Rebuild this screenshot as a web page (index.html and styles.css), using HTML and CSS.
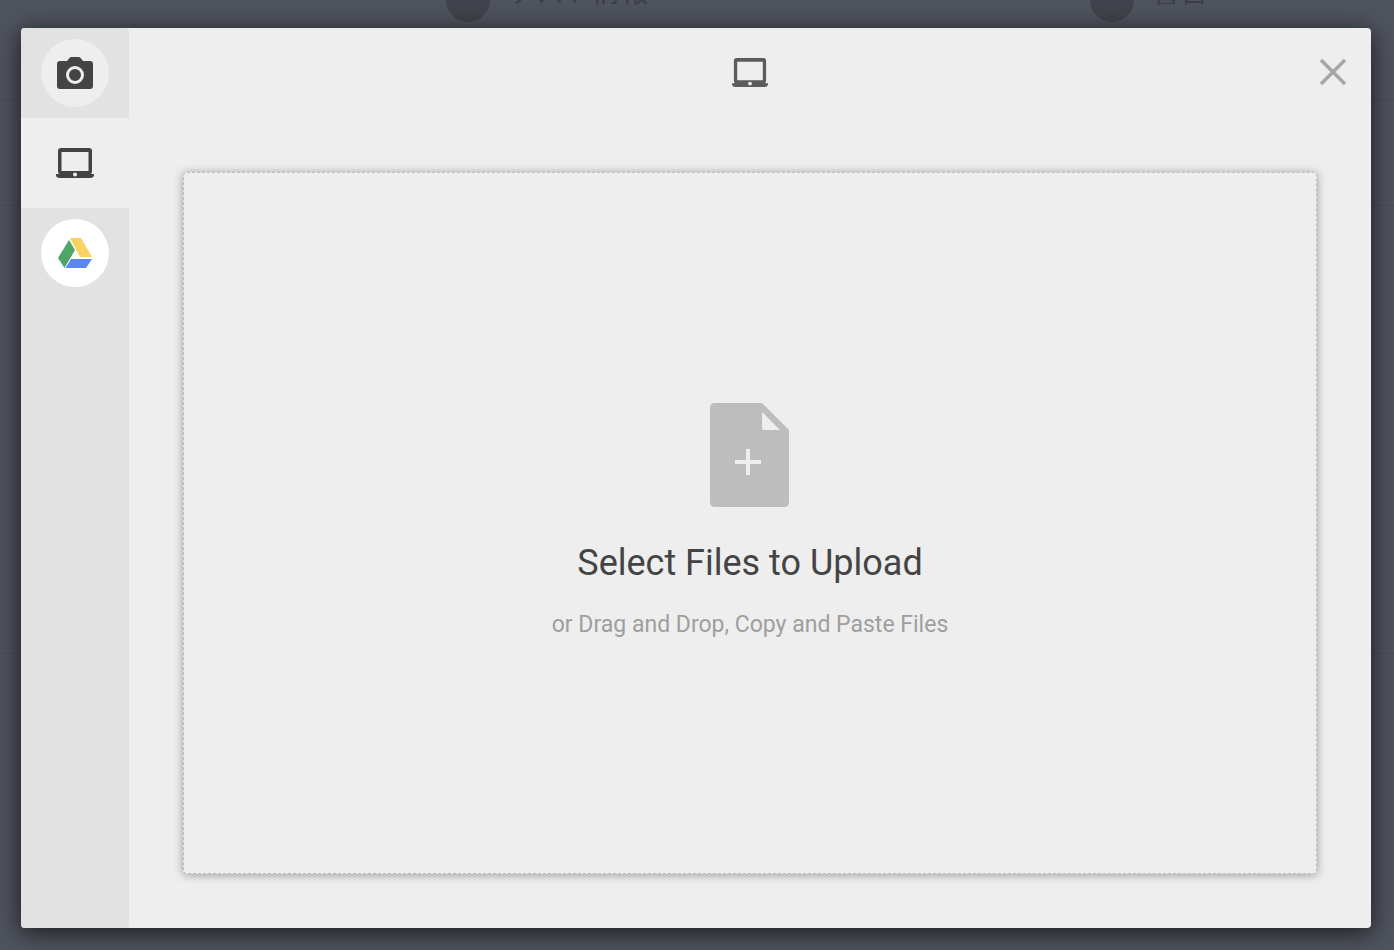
FILE: index.html
```html
<!DOCTYPE html>
<html lang="ja">
<head>
<meta charset="utf-8">
<title>Select Files to Upload</title>
<link rel="stylesheet" href="styles.css">
</head>

<body>
<div id="page">
	<div class="bar">
		<div class="step"><i class="dot"></i><span>ゲスト情報</span></div>
		<div class="step"><i class="dot"></i><span>警告</span></div>
	</div>
	<div class="row"></div>
	<div class="row rowBig"></div>
</div>

<div id="overlay">
	<div id="picker" role="dialog" aria-label="Select Files to Upload">
		<div id="sidebar">
			<button type="button" class="source" aria-label="Camera">
				<span class="circle">
					<svg width="36" height="32" viewBox="0 0 36 32">
						<path fill="#444" d="M3 4h7l2-2.500Q13 0 14 0h8q1 0 2 1.500L26 4h7q3 0 3 3v22q0 3-3 3H3q-3 0-3-3V7q0-3 3-3z"/>
						<circle cx="18" cy="18" r="7.500" fill="none" stroke="#eee" stroke-width="3"/>
					</svg>
				</span>
			</button>
			<button type="button" class="source active" aria-label="My Device">
				<span class="circle">
					<svg width="38" height="30" viewBox="0 0 38 30">
						<path fill="#444" fill-rule="evenodd" d="M5 0h28q3 0 3 3v20q0 2-1 3h3v1q0 3-4 3H4q-4 0-4-3v-1h3q-1-1-1-3V3q0-3 3-3zM5.500 4v19h27V4z"/>
						<circle cx="19" cy="26.500" r="2" fill="#eee"/>
					</svg>
				</span>
			</button>
			<button type="button" class="source" aria-label="Google Drive">
				<span class="circle white">
					<svg width="34" height="30" viewBox="0 0 34 30">
						<path fill="#4da567" d="M11 2L17 12 6.500 30 0 20z"/>
						<path fill="#f9d262" d="M12 0h11l11 19H22z"/>
						<path fill="#5a87ee" d="M13 21h21l-6 9H7.500z"/>
					</svg>
				</span>
			</button>
		</div>
		<div id="content">
			<div id="header">
				<svg class="device" width="36" height="29" viewBox="0 0 38 30" preserveAspectRatio="none">
					<path fill="#5b5b5b" fill-rule="evenodd" d="M5 0h28q3 0 3 3v20q0 2-1 3h3v1q0 3-4 3H4q-4 0-4-3v-1h3q-1-1-1-3V3q0-3 3-3zM5.500 4v19h27V4z"/>
					<circle cx="19" cy="26.500" r="2" fill="#eee"/>
				</svg>
				<button type="button" id="close" aria-label="Close">
					<svg width="28" height="28" viewBox="0 0 28 28">
						<path d="M2 2l24 24M26 2L2 26" stroke="#a6a6a6" stroke-width="3.500"/>
					</svg>
				</button>
			</div>
			<button type="button" id="drop">
				<svg width="80" height="104" viewBox="0 0 80 104">
					<path fill="#bdbdbd" fill-rule="evenodd" d="M5 0h47l27 27v72q0 5-5 5H5q-5 0-5-5V5q0-5 5-5zM52 9v16q0 2 2 2h16z"/>
					<path d="M25 59h26M38 46v26" stroke="#eee" stroke-width="4"/>
				</svg>
				<span class="title">Select Files to Upload</span>
				<span class="hint">or Drag and Drop, Copy and Paste Files</span>
			</button>
		</div>
	</div>
</div>
</body>
</html>
```

FILE: styles.css
```css
/* reset start */
*{ box-sizing:border-box;}
html,body{ height:100%; overflow:hidden;}
body{ margin:0; font-family:Roboto,"Noto Sans CJK JP",sans-serif; background:#4f535c;}
button{ margin:0; padding:0; border:none; background:none; font:inherit; cursor:pointer;}
svg{ display:block;}
/* reset end */

/* page start */
#page{ height:100%; color:#3b3e46;}
.bar{ height:101px; display:grid; grid-template-columns:644px 1fr; padding-left:446px; border-bottom:1px solid #484c55;}
.step{ display:flex; gap:18px; margin-top:-22px; font-size:28px; line-height:30px;}
.dot{ width:44px; height:44px; border-radius:50%; background:#40434b;}
.row{ height:105px; border-bottom:1px solid #484c55;}
.rowBig{ height:448px;}
/* page end */

/* picker start */
#overlay{ position:absolute; top:0; left:0; width:100%; height:100%; padding:28px 23px 22px 21px;}
#picker{ height:100%; display:flex; background:#eee; border-radius:4px; box-shadow:0 4px 24px rgba(0,0,0,.7);}
#sidebar{ width:108px; flex:none; background:#e2e2e2; border-radius:4px;}
.source{ width:100%; height:90px; display:flex; align-items:center; justify-content:center;}
.active{ background:#eee;}
.circle{ width:68px; height:68px; display:flex; align-items:center; justify-content:center; border-radius:50%; background:#eee;}
.white{ background:#fff;}
/* picker end */

/* content start */
#content{ flex:1; display:flex; flex-direction:column;}
#header{ height:88px; display:grid; grid-template-columns:1fr auto 1fr; align-items:center; padding:0 24px;}
.device{ grid-column:2;}
#close{ justify-self:end;}
#drop{ flex:1; display:flex; flex-direction:column; align-items:center; justify-content:center; margin:56px 54px 54px; padding-bottom:4px; border:1px dashed #bbb; border-radius:4px; box-shadow:0 1px 10px rgba(0,0,0,.36);}
.title{ margin-top:32px; font-size:36px; line-height:48px; color:#444;}
.hint{ margin-top:24px; font-size:23px; line-height:28px; color:#9e9e9e;}
/* content end */
```
